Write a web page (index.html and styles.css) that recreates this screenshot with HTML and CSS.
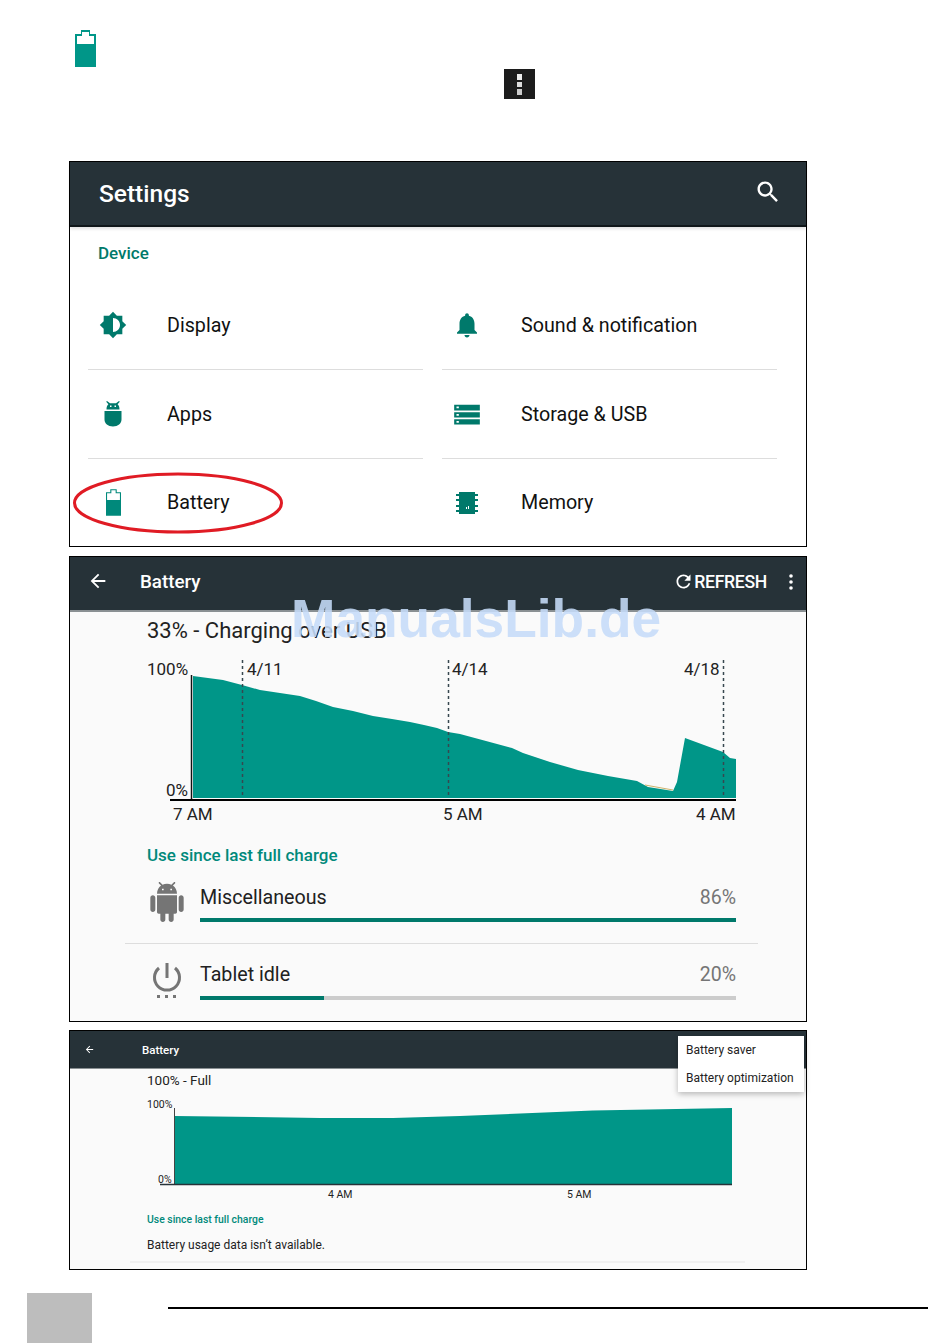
FILE: index.html
```html
<!DOCTYPE html>
<html lang="en">
<head>
<meta charset="utf-8">
<title>Battery settings</title>
<link rel="stylesheet" href="styles.css">
</head>
<body>
<div class="page">
  <div class="intro">
    <svg class="intro-battery" viewBox="0 0 21 37"><path fill="#009688" fill-rule="evenodd" d="M6 0h9v4h6v33H0V4h6zM2 6v8h17V6h-5V2H7v4z"/></svg>
    <svg class="kebab-box" viewBox="0 0 31 30"><rect width="31" height="30" fill="#1c1c1c"/><rect x="13" y="5" width="5" height="6" fill="#eee"/><rect x="13" y="13" width="5" height="5" fill="#ddd"/><rect x="13" y="20" width="5" height="6" fill="#ccc"/></svg>
  </div>

  <section class="panel panel-settings">
    <header class="bar bar-settings">
      <h1 class="settings-title">Settings</h1>
      <svg class="search" viewBox="0 0 24 24"><path fill="#fff" d="M15.5 14h-.79l-.28-.27C15.41 12.59 16 11.11 16 9.5 16 5.91 13.09 3 9.5 3S3 5.91 3 9.5 5.91 16 9.5 16c1.61 0 3.09-.59 4.23-1.57l.27.28v.79l5 4.99L20.49 19l-4.99-5zm-6 0C7.01 14 5 11.99 5 9.5S7.01 5 9.5 5 14 7.01 14 9.5 11.99 14 9.5 14z"/></svg>
    </header>
    <h2 class="device">Device</h2>
    <div class="tiles">
      <div class="tile">
        <span class="tile-icon"><svg class="i28" viewBox="0 0 24 24"><path fill="#00796b" fill-rule="evenodd" d="M20 15.31L23.31 12 20 8.69V4h-4.69L12 .69 8.69 4H4v4.69L.69 12 4 15.31V20h4.69L12 23.31 15.31 20H20v-4.69zM12 18V6c3.31 0 6 2.69 6 6s-2.69 6-6 6z"/></svg></span>
        <span>Display</span>
      </div>
      <div class="tile">
        <span class="tile-icon"><svg class="i30" viewBox="0 0 24 24"><path fill="#00796b" d="M12 22c1.1 0 2-.9 2-2h-4c0 1.1.89 2 2 2zm6-6v-5c0-3.07-1.64-5.64-4.5-6.32V4c0-.83-.67-1.5-1.5-1.5s-1.5.67-1.5 1.500v.68C7.63 5.36 6 7.92 6 11v5l-2 2v1h16v-1l-2-2z"/></svg></span>
        <span>Sound &amp; notification</span>
      </div>
      <div class="tile">
        <span class="tile-icon"><svg class="i28" viewBox="0 0 28 28"><path fill="#00796b" fill-rule="evenodd" d="M8 1l3 2.2h6L20 1l.8.8-2.2 2.4C20 5.4 20.500 7 20.500 9.500H7.500C7.500 7 8 5.400 9.400 4.200L7.200 1.800zM11 5.500v1.500h1.500V5.500zM15.500 5.500v1.500H17V5.500zM5.500 11h17v8.500c0 4-3.500 7-8.500 7s-8.500-3-8.500-7z"/></svg></span>
        <span>Apps</span>
      </div>
      <div class="tile">
        <span class="tile-icon"><svg class="i28" viewBox="0 0 24 24"><path fill="#00796b" fill-rule="evenodd" d="M0 16.500h22v4.500H0zM2 18v1.500h2V18zM0 10.500h22v4.500H0zM2 12v1.500h2V12zM0 4h22v5H0zM2 5.500V7h2V5.500z" transform="translate(1)"/></svg></span>
        <span>Storage &amp; USB</span>
      </div>
      <div class="tile">
        <span class="tile-icon"><svg class="tile-battery" viewBox="0 0 21 37"><path fill="#00897b" fill-rule="evenodd" d="M6 0h9v4h6v33H0V4h6zM1.500 5.500v9.500h18V5.500h-6V1.500h-6v4z"/></svg></span>
        <span>Battery</span>
      </div>
      <div class="tile">
        <span class="tile-icon"><svg class="i28" viewBox="0 0 28 28"><path fill="#00796b" fill-rule="evenodd" d="M6 3h16v2h3v2h-3v3h3v2h-3v4h3v2h-3v3h3v2h-3v2H6v-2H3v-2h3v-3H3v-2h3v-4H3v-2h3V7H3V5h3z"/><path fill="#fff" d="M13 18h1v2h-1zM15 17h1v3h-1z"/></svg></span>
        <span>Memory</span>
      </div>
    </div>
    <svg class="ring" viewBox="0 0 212 64"><ellipse cx="106" cy="32" rx="103.500" ry="29" fill="none" stroke="#e01b24" stroke-width="3"/></svg>
  </section>

  <section class="panel panel-usage">
    <header class="bar bar-usage">
      <svg class="back" viewBox="0 0 24 24"><path fill="#fff" d="M20 11H7.830l5.590-5.590L12 4l-8 8 8 8 1.410-1.410L7.830 13H20v-2z"/></svg>
      <h1 class="bar-title">Battery</h1>
      <svg class="refresh" viewBox="0 0 24 24"><path fill="#fff" d="M17.650 6.350C16.200 4.900 14.210 4 12 4c-4.420 0-7.990 3.580-7.990 8s3.570 8 7.990 8c3.730 0 6.840-2.550 7.730-6h-2.080c-.82 2.330-3.040 4-5.650 4-3.310 0-6-2.690-6-6s2.690-6 6-6c1.660 0 3.140.69 4.220 1.780L13 11h7V4l-2.350 2.350z"/></svg>
      <span class="refresh-label">REFRESH</span>
      <svg class="dots" viewBox="0 0 4 16"><circle cx="2" cy="2" r="1.800" fill="#fff"/><circle cx="2" cy="8" r="1.800" fill="#fff"/><circle cx="2" cy="14" r="1.800" fill="#fff"/></svg>
    </header>
    <div class="usage-body">
      <p class="status">33% - Charging over USB</p>
      <svg class="chart-large" viewBox="147 655 590 170">
        <path fill="#009688" d="M193 676L208 678L223 680L242 685L260 690L280 693L300 696L316 701L333 707L353 711L373 716L392 719L410 722L424 725L437 728L448 732L460 734L486 741L512 748L523 753L550 762L578 770L608 776L637 781L648 787L673 791L677 782L685 738L723 752L730 758L736 759V798H193Z"/>
        <path fill="none" stroke="#cdb36a" stroke-width="1" d="M645 785L673 790"/>
        <g stroke="#37474f" stroke-width="1.500" stroke-dasharray="3 3" fill="none">
          <path d="M242.500 660V798"/><path d="M448.500 660V798"/><path d="M723.500 660V798"/>
        </g>
        <path stroke="#111" stroke-width="1.500" fill="none" d="M191.500 675V800"/>
        <path stroke="#000" stroke-width="2" fill="none" d="M170 800H736"/>
        <g class="chart-text">
          <text x="147" y="675">100%</text>
          <text x="166" y="796">0%</text>
          <text x="173" y="820">7 AM</text>
          <text x="443" y="820">5 AM</text>
          <text x="696" y="820">4 AM</text>
          <text x="247" y="675">4/11</text>
          <text x="452" y="675">4/14</text>
          <text x="684" y="675">4/18</text>
        </g>
      </svg>
      <h2 class="since">Use since last full charge</h2>
      <div class="app-row app-row-first">
        <svg class="app-icon" viewBox="0 0 24 24"><path fill="#757575" d="M6 18c0 .55.45 1 1 1h1v3.500c0 .83.67 1.500 1.500 1.500s1.500-.67 1.500-1.500V19h2v3.500c0 .83.67 1.500 1.500 1.500s1.500-.67 1.500-1.500V19h1c.55 0 1-.45 1-1V8H6v10zM3.500 8C2.670 8 2 8.670 2 9.500v7c0 .83.67 1.500 1.500 1.500S5 17.330 5 16.500v-7C5 8.670 4.330 8 3.500 8zm17 0c-.83 0-1.500.67-1.500 1.500v7c0 .83.67 1.500 1.500 1.500s1.500-.67 1.500-1.500v-7c0-.83-.67-1.500-1.500-1.500zm-4.970-5.840l1.300-1.300c.2-.2.2-.51 0-.71-.2-.2-.51-.2-.71 0l-1.480 1.480C13.850 1.230 12.950 1 12 1c-.96 0-1.860.23-2.660.63L7.850.15c-.2-.2-.51-.2-.71 0-.2.2-.2.51 0 .71l1.310 1.310C6.970 3.260 6 5.010 6 7h12c0-1.990-.97-3.750-2.470-4.840zM10 5H9V4h1v1zm5 0h-1V4h1v1z"/></svg>
        <div class="app-main">
          <div class="app-line"><span>Miscellaneous</span><span class="pct">86%</span></div>
          <div class="meter"><div class="meter-fill meter-full"></div></div>
        </div>
      </div>
      <div class="app-divider"></div>
      <div class="app-row">
        <svg class="app-icon app-icon-power" viewBox="0 0 40 40"><g fill="none" stroke="#757575" stroke-width="3"><path d="M20 1v15"/><path d="M12 6a12.500 12.500 0 1 0 16 0"/></g><g fill="#757575"><rect x="10" y="33" width="3" height="3"/><rect x="18" y="33" width="3" height="3"/><rect x="26" y="33" width="3" height="3"/></g></svg>
        <div class="app-main">
          <div class="app-line"><span>Tablet idle</span><span class="pct">20%</span></div>
          <div class="meter meter-idle"><div class="meter-fill meter-part"></div></div>
        </div>
      </div>
    </div>
  </section>

  <section class="panel panel-full">
    <header class="bar bar-full">
      <svg class="back-small" viewBox="0 0 24 24"><path fill="#fff" d="M20 11H7.830l5.590-5.590L12 4l-8 8 8 8 1.410-1.410L7.830 13H20v-2z"/></svg>
      <h1 class="bar-title-small">Battery</h1>
    </header>
    <div class="full-body">
      <p class="status-small">100% - Full</p>
      <svg class="chart-small" viewBox="147 1092 590 112">
        <path fill="#009688" d="M175 1116L320 1118L393 1118L460 1116L593 1110.500L732 1108V1184H175Z"/>
        <path stroke="#444" stroke-width="1" fill="none" d="M174.500 1108V1185"/>
        <path stroke="#263238" stroke-width="1.500" fill="none" d="M160 1184.500H732"/>
        <g class="chart-text-small">
          <text x="147" y="1108">100%</text>
          <text x="158" y="1183">0%</text>
          <text x="328" y="1198">4 AM</text>
          <text x="567" y="1198">5 AM</text>
        </g>
      </svg>
      <h2 class="since-small">Use since last full charge</h2>
      <p class="no-data">Battery usage data isn’t available.</p>
      <div class="full-divider"></div>
    </div>
    <div class="menu">
      <div class="menu-item">Battery saver</div>
      <div class="menu-item">Battery optimization</div>
    </div>
  </section>

  <footer class="foot">
    <div class="foot-box"></div>
    <div class="foot-rule"></div>
  </footer>

  <div class="watermark">ManualsLib.de</div>
</div>
</body>
</html>
```
FILE: styles.css
```css
* { box-sizing: border-box; }
html, body { margin: 0; padding: 0; background: #fff; }
body { font-family: Roboto, "Liberation Sans", sans-serif; color: #1a1a1a; }
h1, h2, p { margin: 0; font-weight: 400; }
svg { display: block; }

.page { position: relative; width: 950px; height: 1344px; overflow: hidden; }

.intro { display: flex; align-items: flex-start; height: 161px; padding: 30px 0 0 75px; }
.intro-battery { width: 21px; height: 37px; }
.kebab-box { width: 31px; height: 30px; margin: 39px 0 0 408px; }

.panel { position: relative; width: 738px; margin-left: 69px; border: 1px solid #000; }
.panel-settings { height: 386px; background: #fff; }
.panel-usage { height: 466px; margin-top: 9px; background: #fafafa; }
.panel-full { height: 240px; margin-top: 8px; background: #fafafa; }

.bar { display: flex; align-items: center; background: #263238; color: #fff; }
.bar-settings { height: 65px; padding: 0 24px 0 29px; border-bottom: 2px solid #10171a; box-shadow: 0 2px 3px rgba(0,0,0,.12); }
.settings-title { flex: 1; font-size: 24.500px; font-weight: 500; }
.search { width: 28px; height: 28px; margin-top: -4px; }

.device { padding: 15px 0 0 28px; font-size: 17px; line-height: 22px; font-weight: 500; color: #00796b; }

.tiles { display: grid; grid-template-columns: 335px 335px; column-gap: 19px; margin: 17px 0 0 18px; }
.tile { display: flex; align-items: center; height: 89px; font-size: 19.700px; color: #111; border-bottom: 1px solid #ddd; }
.tile:nth-child(n+5) { padding-bottom: 2px; border-bottom: 0; }
.tile-icon { display: flex; justify-content: center; width: 50px; margin-right: 29px; }
.i28 { width: 28px; height: 28px; }
.i30 { width: 30px; height: 30px; }
.tile-battery { width: 15px; height: 27px; }

.ring { position: absolute; left: 2px; top: 309px; width: 212px; height: 64px; }

.bar-usage { height: 55px; padding: 0 13px 0 17px; border-bottom: 2px solid #8a9093; }
.back { width: 22px; height: 22px; margin-top: -5px; }
.bar-title { flex: 1; margin: -4px 0 0 31px; font-size: 18.800px; font-weight: 500; }
.refresh { width: 21px; height: 21px; margin: -4px 1px 0 0; }
.refresh-label { margin: -4px 22px 0 -1px; font-size: 17.600px; font-weight: 500; letter-spacing: -.3px; }
.dots { width: 4px; height: 16px; margin-top: -4px; }

.usage-body { padding: 7px 0 0 77px; }
.status { font-size: 22px; line-height: 24px; color: #222; }
.chart-large { width: 590px; height: 170px; margin-top: 12px; }
.chart-text text { font-family: Roboto, sans-serif; font-size: 17px; fill: #222; }
.since { margin-top: 20px; font-size: 17px; line-height: 20px; font-weight: 500; color: #00897b; }

.app-row { display: flex; gap: 13px; height: 40px; }
.app-row-first { margin-top: 17px; }
.app-icon { flex: none; width: 40px; height: 40px; }
.app-icon-power { margin-top: 3px; }
.app-main { flex: none; width: 536px; }
.app-line { display: flex; justify-content: space-between; font-size: 19.700px; line-height: 32px; color: #212121; }
.pct { font-size: 19.500px; color: #757575; }
.meter { height: 4px; margin-top: 4px; }
.meter-idle { margin-top: 5px; background: #ccc; }
.meter-fill { height: 100%; background: #00796b; }
.meter-full { width: 100%; }
.meter-part { width: 23.100%; }
.app-divider { width: 633px; height: 1px; margin: 21px 0 15px -22px; background: #ddd; }

.bar-full { height: 38px; padding: 0 0 0 14px; border-bottom: 1px solid #8a9093; }
.back-small { width: 11px; height: 11px; }
.bar-title-small { margin-left: 47px; font-size: 11.500px; font-weight: 500; }

.full-body { padding: 2px 0 0 77px; }
.status-small { font-size: 13.500px; line-height: 18px; color: #222; }
.chart-small { width: 590px; height: 112px; margin-top: 3px; }
.chart-text-small text { font-family: Roboto, sans-serif; font-size: 10.500px; fill: #222; }
.since-small { margin-top: 9px; font-size: 10.400px; line-height: 14px; font-weight: 500; color: #00897b; }
.no-data { margin-top: 10px; font-size: 12px; line-height: 16px; color: #222; }
.full-divider { width: 615px; height: 2px; margin: 8px 0 0 -17px; background: #f0f0f0; }

.menu { position: absolute; left: 608px; top: 5px; width: 126px; height: 56px; padding-top: 1px; background: #fff; box-shadow: 0 2px 6px rgba(0,0,0,.28); }
.menu-item { height: 28px; padding-left: 8px; font-size: 12px; line-height: 26px; color: #222; }

.foot { display: flex; align-items: flex-start; margin-top: 23px; padding-left: 27px; }
.foot-box { width: 65px; height: 50px; background: #bdbdbd; }
.foot-rule { width: 760px; height: 2px; margin: 14px 0 0 76px; background: #000; }

.watermark { position: absolute; left: 291px; top: 589px; font-family: "Liberation Sans", Arial, sans-serif; font-size: 53.300px; line-height: 60px; font-weight: 700; color: #c6dcf9; opacity: .88; white-space: nowrap; }
```
